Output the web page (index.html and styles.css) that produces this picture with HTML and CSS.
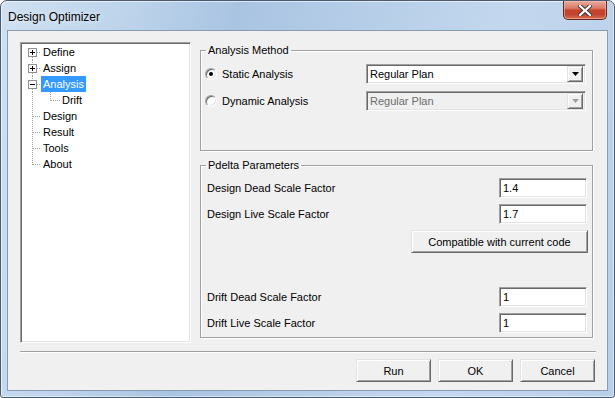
FILE: index.html
```html
<!DOCTYPE html>
<html>
<head>
<meta charset="utf-8">
<link rel="stylesheet" href="styles.css">
</head>
<body>
<div class="window">
  <div class="titlebar">
    <span class="title">Design Optimizer</span>
    <div class="close">
      <svg width="14" height="11" viewBox="0 0 14 11"><path d="M2 1 L12 10 M12 1 L2 10" stroke="#3b3b3b" stroke-width="4.2" stroke-linecap="square"/><path d="M2 1 L12 10 M12 1 L2 10" stroke="#fff" stroke-width="2.2" stroke-linecap="square"/></svg>
    </div>
  </div>
  <div class="client">
    <div class="main">
      <div class="tree">
        <div class="node">
          <svg class="conn" width="19" height="16"><line x1="10.5" y1="13" x2="10.5" y2="16" class="dot"/><line x1="15" y1="8.5" x2="19" y2="8.5" class="dot"/><rect x="6.5" y="4.5" width="8" height="8" class="box"/><path d="M8 8.5H13M10.5 6V11" class="sign"/></svg>
          <span class="label">Define</span>
        </div>
        <div class="node">
          <svg class="conn" width="19" height="16"><line x1="10.5" y1="0" x2="10.5" y2="4" class="dot"/><line x1="10.5" y1="13" x2="10.5" y2="16" class="dot"/><line x1="15" y1="8.5" x2="19" y2="8.5" class="dot"/><rect x="6.5" y="4.5" width="8" height="8" class="box"/><path d="M8 8.5H13M10.5 6V11" class="sign"/></svg>
          <span class="label">Assign</span>
        </div>
        <div class="node">
          <svg class="conn" width="19" height="16"><line x1="10.5" y1="0" x2="10.5" y2="4" class="dot"/><line x1="10.5" y1="13" x2="10.5" y2="16" class="dot"/><line x1="15" y1="8.5" x2="19" y2="8.5" class="dot"/><rect x="6.5" y="4.5" width="8" height="8" class="box"/><path d="M8 8.5H13" class="sign"/></svg>
          <span class="label selected">Analysis</span>
        </div>
        <div class="node">
          <svg class="conn" width="38" height="16"><line x1="10.5" y1="0" x2="10.5" y2="16" class="dot"/><line x1="28.5" y1="0" x2="28.5" y2="9" class="dot"/><line x1="29" y1="8.5" x2="38" y2="8.5" class="dot"/></svg>
          <span class="label">Drift</span>
        </div>
        <div class="node">
          <svg class="conn" width="19" height="16"><line x1="10.5" y1="0" x2="10.5" y2="16" class="dot"/><line x1="11" y1="8.5" x2="19" y2="8.5" class="dot"/></svg>
          <span class="label">Design</span>
        </div>
        <div class="node">
          <svg class="conn" width="19" height="16"><line x1="10.5" y1="0" x2="10.5" y2="16" class="dot"/><line x1="11" y1="8.5" x2="19" y2="8.5" class="dot"/></svg>
          <span class="label">Result</span>
        </div>
        <div class="node">
          <svg class="conn" width="19" height="16"><line x1="10.5" y1="0" x2="10.5" y2="16" class="dot"/><line x1="11" y1="8.5" x2="19" y2="8.5" class="dot"/></svg>
          <span class="label">Tools</span>
        </div>
        <div class="node">
          <svg class="conn" width="19" height="16"><line x1="10.5" y1="0" x2="10.5" y2="9" class="dot"/><line x1="11" y1="8.5" x2="19" y2="8.5" class="dot"/></svg>
          <span class="label">About</span>
        </div>
      </div>
      <div class="panel">
        <fieldset class="group group-method">
          <legend>Analysis Method</legend>
          <div class="row first">
            <span class="radio checked"></span>
            <span class="radio-label">Static Analysis</span>
            <div class="combo">
              <span class="combo-text">Regular Plan</span>
              <span class="combo-btn"><svg width="7" height="4"><polygon points="0,0 7,0 3.5,4" fill="#000"/></svg></span>
            </div>
          </div>
          <div class="row">
            <span class="radio"></span>
            <span class="radio-label">Dynamic Analysis</span>
            <div class="combo disabled">
              <span class="combo-text">Regular Plan</span>
              <span class="combo-btn"><svg width="7" height="4"><polygon points="0,0 7,0 3.5,4" fill="#a0a0a0"/></svg></span>
            </div>
          </div>
        </fieldset>
        <fieldset class="group group-pdelta">
          <legend>Pdelta Parameters</legend>
          <div class="row first">
            <span class="field-label">Design Dead Scale Factor</span>
            <span class="input">1.4</span>
          </div>
          <div class="row">
            <span class="field-label">Design Live Scale Factor</span>
            <span class="input">1.7</span>
          </div>
          <div class="row btn-row">
            <button class="btn wide">Compatible with current code</button>
          </div>
          <div class="row drift">
            <span class="field-label">Drift Dead Scale Factor</span>
            <span class="input">1</span>
          </div>
          <div class="row">
            <span class="field-label">Drift Live Scale Factor</span>
            <span class="input">1</span>
          </div>
        </fieldset>
      </div>
    </div>
    <div class="sep"></div>
    <div class="buttons">
      <button class="btn">Run</button>
      <button class="btn">OK</button>
      <button class="btn">Cancel</button>
    </div>
  </div>
</div>
</body>
</html>
```
FILE: styles.css
```css
* { box-sizing: border-box; }
html, body { margin: 0; padding: 0; background: #fff; }
body { font-family: "Liberation Sans", Arial, sans-serif; font-size: 11px; color: #000; }

.window {
  width: 615px;
  height: 398px;
  border: 1px solid #4a5a70;
  border-radius: 7px 7px 3px 3px;
  background: linear-gradient(100deg, #cfe0f2 0%, #bed4eb 18%, #a9c4e2 35%, #b7cee8 55%, #c3d8ee 75%, #b8cfe9 100%);
  box-shadow: inset 1px 1px 0 rgba(255,255,255,0.6), inset -1px -1px 0 rgba(255,255,255,0.5);
  display: flex;
  flex-direction: column;
}

.titlebar {
  height: 29px;
  display: flex;
  justify-content: space-between;
  align-items: flex-start;
  padding-left: 7px;
}
.title {
  font-size: 12px;
  margin-top: 9px;
  color: #000;
  text-shadow: 0 0 6px rgba(255,255,255,0.9);
}
.close {
  width: 44px;
  height: 19px;
  margin-right: 7px;
  border: 1px solid #5e2a22;
  border-top: none;
  border-radius: 0 0 5px 5px;
  background: linear-gradient(#e9ab9c 0%, #db7b68 40%, #c7432d 50%, #c24330 75%, #d8704f 100%);
  box-shadow: inset 0 0 0 1px rgba(255,200,190,0.5);
  display: flex;
  align-items: center;
  justify-content: center;
}

.client {
  margin: 0 6px 0 6px;
  height: 361px;
  border: 1px solid #8a9ab0;
  background: #f0f0f0;
}

.main {
  display: flex;
  padding: 11px 0 0 12px;
}

.tree {
  width: 171px;
  height: 301px;
  background: #fff;
  border: 1px solid;
  border-color: #a0a0a0 #fff #fff #a0a0a0;
  box-shadow: inset 1px 1px 0 #696969, inset -1px -1px 0 #e3e3e3;
  padding: 1px 0 0 1px;
}
.node { display: flex; height: 16px; align-items: center; }
.conn { display: block; flex: none; }
.dot { stroke: #a0a0a0; stroke-width: 1; stroke-dasharray: 1 1; shape-rendering: crispEdges; }
.box { fill: #fff; stroke: #919191; stroke-width: 1; shape-rendering: crispEdges; }
.sign { stroke: #000; stroke-width: 1; shape-rendering: crispEdges; fill: none; }
.label { padding: 0 2px; line-height: 16px; height: 16px; }
.label.selected { background: #3399ff; color: #fff; }

.panel {
  margin-left: 9px;
  width: 393px;
  display: flex;
  flex-direction: column;
}

.group {
  margin: 0;
  padding: 0;
  border: 1px solid #a0a0a0;
  box-shadow: inset 1px 1px 0 #fff, 1px 1px 0 #fff;
  min-width: 0;
}
.group legend {
  padding: 0 2px;
  margin-left: 5px;
  line-height: 14px;
  height: 14px;
}
.group-method { margin-top: 1px; height: 108px; }
.group-pdelta { margin-top: 7px; height: 180px; }

.row {
  display: flex;
  align-items: center;
  height: 20px;
  margin-top: 6px;
  padding-left: 6px;
}
.group-method .row { margin-top: 7px; padding-left: 4px; }

.radio {
  width: 12px;
  height: 12px;
  border-radius: 50%;
  background: #fff;
  border: 1px solid;
  border-color: #a0a0a0 #fff #fff #a0a0a0;
  box-shadow: inset 1px 1px 0 #696969, inset -1px -1px 0 #e3e3e3;
  display: flex;
  align-items: center;
  justify-content: center;
  flex: none;
}
.radio.checked::after {
  content: "";
  width: 4px;
  height: 4px;
  border-radius: 50%;
  background: #000;
}
.radio-label { margin-left: 5px; }

.combo {
  margin-left: auto;
  margin-right: 6px;
  width: 220px;
  height: 20px;
  background: #fff;
  border: 1px solid;
  border-color: #a0a0a0 #fff #fff #a0a0a0;
  box-shadow: inset 1px 1px 0 #696969, inset -1px -1px 0 #e3e3e3;
  display: flex;
  align-items: center;
  padding: 1px 2px 1px 2px;
}
.combo.disabled { background: #f0f0f0; color: #6d6d6d; }
.combo-text { flex: 1; padding-left: 1px; }
.combo-btn {
  width: 16px;
  height: 16px;
  background: #f0f0f0;
  border: 1px solid;
  border-color: #e3e3e3 #696969 #696969 #e3e3e3;
  box-shadow: inset 1px 1px 0 #fff, inset -1px -1px 0 #a0a0a0;
  display: flex;
  align-items: center;
  justify-content: center;
}
.combo-btn svg { display: block; }

.field-label { flex: 1; }
.input {
  width: 88px;
  height: 20px;
  margin-right: 5px;
  background: #fff;
  border: 1px solid;
  border-color: #a0a0a0 #fff #fff #a0a0a0;
  box-shadow: inset 1px 1px 0 #696969, inset -1px -1px 0 #e3e3e3;
  padding: 0 3px;
  line-height: 18px;
}

.btn-row { height: 23px; justify-content: flex-end; }
.drift { margin-top: 34px; }

.btn {
  font-family: "Liberation Sans", Arial, sans-serif;
  font-size: 11px;
  color: #000;
  width: 75px;
  height: 23px;
  padding: 0;
  background: #f0f0f0;
  border: 1px solid;
  border-color: #e3e3e3 #696969 #696969 #e3e3e3;
  box-shadow: inset 1px 1px 0 #fff, inset -1px -1px 0 #a0a0a0;
  border-radius: 0;
}
.btn.wide { width: 177px; margin-right: 4px; }

.sep {
  margin: 8px 11px 0 12px;
  height: 2px;
  border-top: 1px solid #a0a0a0;
  border-bottom: 1px solid #fff;
}

.buttons {
  display: flex;
  justify-content: flex-end;
  gap: 7px;
  margin-top: 6px;
  padding-right: 12px;
}
```
